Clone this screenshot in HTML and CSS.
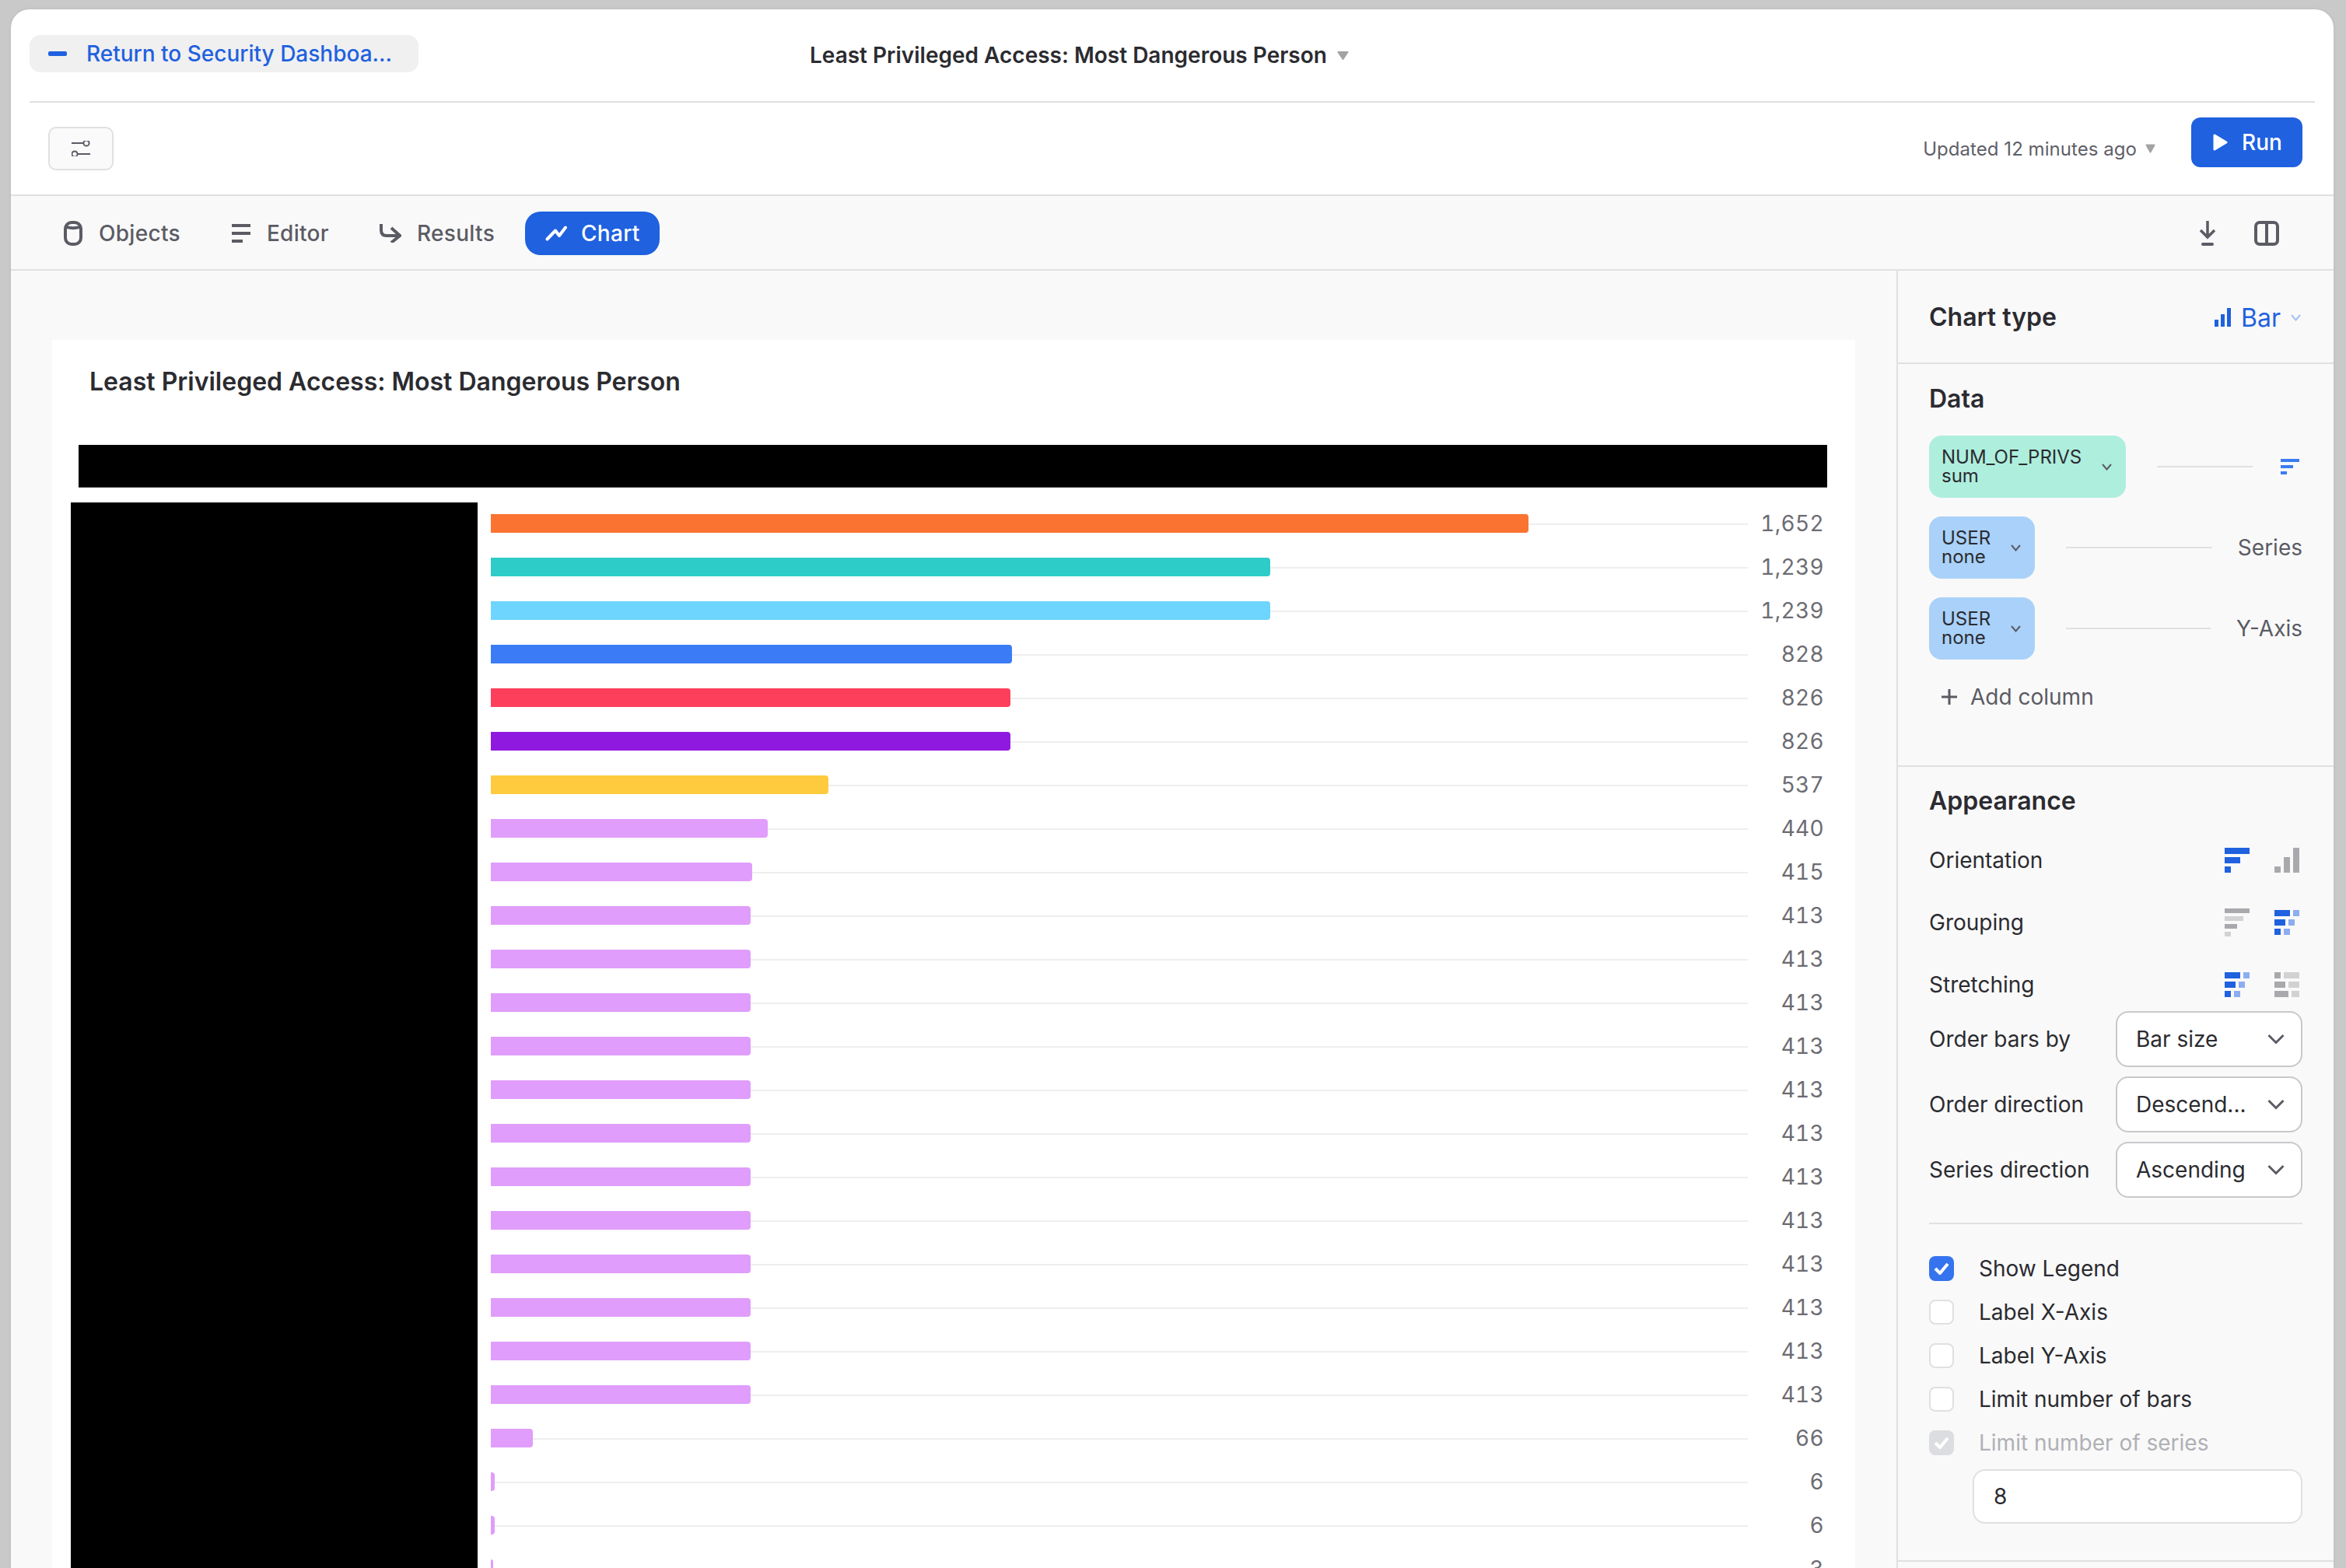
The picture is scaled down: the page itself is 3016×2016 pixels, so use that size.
FILE: index.html
```html
<!DOCTYPE html>
<html lang="en">
<head>
    <meta charset="UTF-8">
    <title>Least Privileged Access: Most Dangerous Person</title>
    <link rel="stylesheet" href="styles.css">
</head>
<body>
<div class="window">

    <!-- Top bar -->
    <div class="top-bar">
        <div class="back-btn">
            <svg width="24" height="6" viewBox="0 0 24 6"><rect width="24" height="6" rx="2" fill="#1f61df"/></svg>
            <span>Return to Security Dashboa...</span>
        </div>
        <div class="page-title">Least Privileged Access: Most Dangerous Person</div>
        <svg class="caret" width="15" height="11" viewBox="0 0 15 11"><path d="M1.5 1h12L7.5 10z" fill="#a3a3a6" stroke="#a3a3a6" stroke-width="2" stroke-linejoin="round"/></svg>
    </div>

    <!-- Toolbar -->
    <div class="toolbar">
        <div class="filter-btn">
            <svg width="24" height="20" viewBox="0 0 24 20" fill="none" stroke="#5b5b64" stroke-width="2">
                <path d="M0 3h15.500M24 17H8"/>
                <circle cx="19" cy="3" r="3.600"/>
                <circle cx="4" cy="17" r="3.600"/>
            </svg>
        </div>
        <div class="updated">Updated 12 minutes ago</div>
        <svg class="updated-caret" width="13" height="12" viewBox="0 0 13 12"><path d="M1.5 1.5h10L6.5 10.500z" fill="#a3a3a6" stroke="#a3a3a6" stroke-width="2" stroke-linejoin="round"/></svg>
        <div class="run-btn">
            <svg width="19" height="22" viewBox="0 0 19 22"><path d="M2 2l15 9L2 20z" fill="#fff" stroke="#fff" stroke-width="3" stroke-linejoin="round"/></svg>
            <span>Run</span>
        </div>
    </div>

    <!-- Tabs -->
    <div class="tabs">
        <div class="tab">
            <svg width="26" height="32" viewBox="0 0 26 32" fill="none" stroke="#5b5b64" stroke-width="4">
                <rect x="3" y="2" width="20" height="28" rx="8"/>
                <path d="M3 6.500c3 3.500 17 3.500 20 0"/>
            </svg>
            <span>Objects</span>
        </div>
        <div class="tab">
            <svg width="26" height="24" viewBox="0 0 26 24" fill="#5b5b64">
                <rect x="1" y="0" width="24" height="4"/>
                <rect x="1" y="10" width="24" height="4"/>
                <rect x="1" y="20" width="14" height="4"/>
            </svg>
            <span>Editor</span>
        </div>
        <div class="tab">
            <svg width="28" height="24" viewBox="0 0 28 24" fill="none" stroke="#5b5b64" stroke-width="4">
                <path d="M2 0v8q0 7 7 7h17"/>
                <path d="M15 5l11 10-11 9"/>
            </svg>
            <span>Results</span>
        </div>
        <div class="tab tab-active">
            <svg width="28" height="22" viewBox="0 0 28 22" fill="none" stroke="#fff" stroke-width="4" stroke-linecap="round" stroke-linejoin="round">
                <path d="M2.500 18.500L13 7.500l5 6.500 8-10.500"/>
            </svg>
            <span>Chart</span>
        </div>
        <div class="tab-tools">
            <svg width="22" height="32" viewBox="0 0 22 32" fill="none" stroke="#5b5b64" stroke-width="3.500">
                <path d="M11 0v20M2 12l9 9 9-9"/>
                <path d="M5 30h12" stroke-width="4" stroke-linecap="round"/>
            </svg>
            <svg width="32" height="32" viewBox="0 0 32 32" fill="none" stroke="#5b5b64" stroke-width="4">
                <rect x="2" y="2" width="28" height="28" rx="5"/>
                <path d="M16 2v28"/>
            </svg>
        </div>
    </div>

    <div class="main">

        <!-- Chart -->
        <div class="canvas">
            <div class="card">
                <h1 class="card-title">Least Privileged Access: Most Dangerous Person</h1>
                <div class="mask-top"></div>
                <div class="chart-body">
                    <div class="mask-left"></div>
                    <div class="plot">
                        <div class="row"><div class="bar orange" style="width:1334px"></div><div class="grid-line"></div><div class="value">1,652</div></div>
                        <div class="row"><div class="bar teal" style="width:1002px"></div><div class="grid-line"></div><div class="value">1,239</div></div>
                        <div class="row"><div class="bar sky" style="width:1002px"></div><div class="grid-line"></div><div class="value">1,239</div></div>
                        <div class="row"><div class="bar blue" style="width:670px"></div><div class="grid-line"></div><div class="value">828</div></div>
                        <div class="row"><div class="bar red" style="width:668px"></div><div class="grid-line"></div><div class="value">826</div></div>
                        <div class="row"><div class="bar purple" style="width:668px"></div><div class="grid-line"></div><div class="value">826</div></div>
                        <div class="row"><div class="bar yellow" style="width:434px"></div><div class="grid-line"></div><div class="value">537</div></div>
                        <div class="row"><div class="bar pink" style="width:356px"></div><div class="grid-line"></div><div class="value">440</div></div>
                        <div class="row"><div class="bar pink" style="width:336px"></div><div class="grid-line"></div><div class="value">415</div></div>
                        <div class="row"><div class="bar pink" style="width:334px"></div><div class="grid-line"></div><div class="value">413</div></div>
                        <div class="row"><div class="bar pink" style="width:334px"></div><div class="grid-line"></div><div class="value">413</div></div>
                        <div class="row"><div class="bar pink" style="width:334px"></div><div class="grid-line"></div><div class="value">413</div></div>
                        <div class="row"><div class="bar pink" style="width:334px"></div><div class="grid-line"></div><div class="value">413</div></div>
                        <div class="row"><div class="bar pink" style="width:334px"></div><div class="grid-line"></div><div class="value">413</div></div>
                        <div class="row"><div class="bar pink" style="width:334px"></div><div class="grid-line"></div><div class="value">413</div></div>
                        <div class="row"><div class="bar pink" style="width:334px"></div><div class="grid-line"></div><div class="value">413</div></div>
                        <div class="row"><div class="bar pink" style="width:334px"></div><div class="grid-line"></div><div class="value">413</div></div>
                        <div class="row"><div class="bar pink" style="width:334px"></div><div class="grid-line"></div><div class="value">413</div></div>
                        <div class="row"><div class="bar pink" style="width:334px"></div><div class="grid-line"></div><div class="value">413</div></div>
                        <div class="row"><div class="bar pink" style="width:334px"></div><div class="grid-line"></div><div class="value">413</div></div>
                        <div class="row"><div class="bar pink" style="width:334px"></div><div class="grid-line"></div><div class="value">413</div></div>
                        <div class="row"><div class="bar pink" style="width:54px"></div><div class="grid-line"></div><div class="value">66</div></div>
                        <div class="row"><div class="bar pink" style="width:5px"></div><div class="grid-line"></div><div class="value">6</div></div>
                        <div class="row"><div class="bar pink" style="width:5px"></div><div class="grid-line"></div><div class="value">6</div></div>
                        <div class="row"><div class="bar pink" style="width:3px"></div><div class="grid-line"></div><div class="value">3</div></div>
                    </div>
                </div>
            </div>
        </div>

        <!-- Settings panel -->
        <div class="sidebar">
            <div class="section chart-type">
                <h3>Chart type</h3>
                <div class="type-picker">
                    <svg width="21" height="24" viewBox="0 0 21 24" fill="#1f61df">
                        <rect x="0" y="15" width="5" height="9"/>
                        <rect x="8" y="8" width="5" height="16"/>
                        <rect x="16" y="0" width="5" height="24"/>
                    </svg>
                    <span>Bar</span>
                    <svg width="13" height="9" viewBox="0 0 13 9" fill="none" stroke="#a3c0f3" stroke-width="2"><path d="M1 1l5.500 6.500L12 1"/></svg>
                </div>
            </div>

            <div class="section data-section">
                <h3>Data</h3>
                <div class="data-row">
                    <div class="pill pill-green">
                        <div>NUM_OF_PRIVS<br>sum</div>
                        <svg width="13" height="9" viewBox="0 0 13 9" fill="none" stroke="#5b5b64" stroke-width="2"><path d="M1 1l5.500 6.500L12 1"/></svg>
                    </div>
                    <div class="connector"></div>
                    <svg class="sort-icon" width="24" height="20" viewBox="0 0 24 20" fill="#3b7cf2">
                        <rect width="24" height="4"/>
                        <rect y="8" width="16" height="4"/>
                        <rect y="16" width="8" height="4"/>
                    </svg>
                </div>
                <div class="data-row">
                    <div class="pill pill-blue">
                        <div>USER<br>none</div>
                        <svg width="13" height="9" viewBox="0 0 13 9" fill="none" stroke="#5b5b64" stroke-width="2"><path d="M1 1l5.500 6.500L12 1"/></svg>
                    </div>
                    <div class="connector"></div>
                    <div class="axis-label">Series</div>
                </div>
                <div class="data-row">
                    <div class="pill pill-blue">
                        <div>USER<br>none</div>
                        <svg width="13" height="9" viewBox="0 0 13 9" fill="none" stroke="#5b5b64" stroke-width="2"><path d="M1 1l5.500 6.500L12 1"/></svg>
                    </div>
                    <div class="connector"></div>
                    <div class="axis-label">Y-Axis</div>
                </div>
                <div class="add-column">
                    <svg width="20" height="20" viewBox="0 0 20 20" fill="#5b5b64"><rect y="8.500" width="20" height="3"/><rect x="8.500" width="3" height="20"/></svg>
                    <span>Add column</span>
                </div>
            </div>

            <div class="section appearance">
                <h3>Appearance</h3>
                <div class="option-row">
                    <span>Orientation</span>
                    <div class="option-icons">
                        <svg width="32" height="32" viewBox="0 0 32 32" fill="#1f61df">
                            <rect width="32" height="8"/><rect y="12" width="20" height="8"/><rect y="24" width="8" height="8"/>
                        </svg>
                        <svg width="32" height="32" viewBox="0 0 32 32" fill="#a9a9ad">
                            <rect y="24" width="8" height="8"/><rect x="12" y="12" width="8" height="20"/><rect x="24" width="8" height="32"/>
                        </svg>
                    </div>
                </div>
                <div class="option-row">
                    <span>Grouping</span>
                    <div class="option-icons">
                        <svg width="32" height="36" viewBox="0 0 32 36">
                            <rect width="32" height="6" fill="#a9a9ad"/><rect y="10" width="24" height="6" fill="#d2d2d4"/>
                            <rect y="20" width="16" height="6" fill="#a9a9ad"/><rect y="30" width="8" height="6" fill="#d2d2d4"/>
                        </svg>
                        <svg width="32" height="32" viewBox="0 0 32 32">
                            <g fill="#1f61df"><rect width="20" height="8"/><rect y="12" width="14" height="8"/><rect y="24" width="8" height="8"/></g>
                            <g fill="#8caef0"><rect x="24" width="8" height="8"/><rect x="18" y="12" width="8" height="8"/><rect x="12" y="24" width="8" height="8"/></g>
                        </svg>
                    </div>
                </div>
                <div class="option-row">
                    <span>Stretching</span>
                    <div class="option-icons">
                        <svg width="32" height="32" viewBox="0 0 32 32">
                            <g fill="#1f61df"><rect width="20" height="8"/><rect y="12" width="14" height="8"/><rect y="24" width="8" height="8"/></g>
                            <g fill="#8caef0"><rect x="24" width="8" height="8"/><rect x="18" y="12" width="8" height="8"/><rect x="12" y="24" width="8" height="8"/></g>
                        </svg>
                        <svg width="32" height="32" viewBox="0 0 32 32">
                            <g fill="#a9a9ad"><rect width="8" height="8"/><rect y="12" width="14" height="8"/><rect y="24" width="18" height="8"/></g>
                            <g fill="#d2d2d4"><rect x="12" width="20" height="8"/><rect x="18" y="12" width="14" height="8"/><rect x="22" y="24" width="10" height="8"/></g>
                        </svg>
                    </div>
                </div>

                <div class="select-list">
                    <div class="select-row">
                        <span>Order bars by</span>
                        <div class="select">
                            <span>Bar size</span>
                            <svg width="22" height="14" viewBox="0 0 22 14" fill="none" stroke="#5b5b64" stroke-width="3"><path d="M1.500 2L11 11.500 20.500 2"/></svg>
                        </div>
                    </div>
                    <div class="select-row">
                        <span>Order direction</span>
                        <div class="select">
                            <span>Descend...</span>
                            <svg width="22" height="14" viewBox="0 0 22 14" fill="none" stroke="#5b5b64" stroke-width="3"><path d="M1.500 2L11 11.500 20.500 2"/></svg>
                        </div>
                    </div>
                    <div class="select-row">
                        <span>Series direction</span>
                        <div class="select">
                            <span>Ascending</span>
                            <svg width="22" height="14" viewBox="0 0 22 14" fill="none" stroke="#5b5b64" stroke-width="3"><path d="M1.500 2L11 11.500 20.500 2"/></svg>
                        </div>
                    </div>
                </div>

                <div class="divider"></div>

                <div class="check-list">
                    <div class="check-row">
                        <div class="checkbox checked">
                            <svg width="20" height="16" viewBox="0 0 20 16" fill="none" stroke="#fff" stroke-width="4"><path d="M2 8l6 6L18 2"/></svg>
                        </div>
                        <span>Show Legend</span>
                    </div>
                    <div class="check-row"><div class="checkbox"></div><span>Label X-Axis</span></div>
                    <div class="check-row"><div class="checkbox"></div><span>Label Y-Axis</span></div>
                    <div class="check-row"><div class="checkbox"></div><span>Limit number of bars</span></div>
                    <div class="check-row disabled">
                        <div class="checkbox disabled-box">
                            <svg width="20" height="16" viewBox="0 0 20 16" fill="none" stroke="#fff" stroke-width="4"><path d="M2 8l6 6L18 2"/></svg>
                        </div>
                        <span>Limit number of series</span>
                    </div>
                </div>
                <div class="number-input">8</div>
            </div>

            <div class="section-end"></div>
        </div>
    </div>
</div>
</body>
</html>
```

FILE: styles.css
```css
* {
    box-sizing: border-box;
}
body {
    margin: 0;
    height: 2016px;
    overflow: hidden;
    background: #c9c9c9;
    font-family: Inter, "Liberation Sans", sans-serif;
    font-size: 28px;
    color: #2b2b30;
}
.window {
    margin: 12px 16px 0 14px;
    height: 2004px;
    background: white;
    border-radius: 24px 24px 0 0;
    box-shadow: 0 0 4px rgba(0, 0, 0, 0.08);
    overflow: hidden;
    display: flex;
    flex-direction: column;
}

/* top bar */
.top-bar {
    height: 120px;
    margin: 0 24px;
    padding-top: 33px;
    display: flex;
    align-items: flex-start;
    border-bottom: 2px solid #e0e0e0;
}
.back-btn {
    width: 500px;
    height: 48px;
    padding-left: 24px;
    display: flex;
    align-items: center;
    gap: 25px;
    background: #f0f0f0;
    border-radius: 14px;
    color: #1f61df;
    font-weight: 500;
    white-space: nowrap;
}
.page-title {
    margin-left: 503px;
    line-height: 52px;
    font-weight: 600;
    white-space: nowrap;
}
.caret {
    margin: 21px 0 0 13px;
}

/* toolbar */
.toolbar {
    height: 120px;
    padding: 19px 40px 0 48px;
    display: flex;
    align-items: flex-start;
    border-bottom: 2px solid #e0e0e0;
}
.filter-btn {
    width: 84px;
    height: 56px;
    margin-top: 12px;
    display: flex;
    align-items: center;
    justify-content: center;
    background: #fafafa;
    border: 2px solid #e0e0e0;
    border-radius: 10px;
}
.updated {
    margin: 23px 0 0 auto;
    line-height: 36px;
    font-size: 24px;
    letter-spacing: 0.05px;
    color: #5f5f68;
}
.updated-caret {
    margin: 34px 46px 0 11px;
}
.run-btn {
    width: 143px;
    height: 64px;
    padding-left: 28px;
    display: flex;
    align-items: center;
    gap: 18px;
    background: #1f61df;
    border-radius: 12px;
    color: white;
    font-weight: 500;
}

/* tabs */
.tabs {
    height: 96px;
    padding: 2px 70px 0 41px;
    display: flex;
    align-items: center;
    gap: 16px;
    background: #f9f9f9;
    border-bottom: 2px solid #e0e0e0;
}
.tab {
    height: 56px;
    padding: 0 23px 0 26px;
    display: flex;
    align-items: center;
    gap: 20px;
    border-radius: 20px;
    color: #5b5b64;
    font-weight: 500;
    letter-spacing: 0.3px;
}
.tab-active {
    padding-right: 25px;
    gap: 18px;
    background: #1f61df;
    color: white;
}
.tab-tools {
    margin-left: auto;
    display: flex;
    align-items: center;
    gap: 49px;
}

/* chart */
.main {
    flex: 1;
    display: flex;
    min-height: 0;
}
.canvas {
    flex: 1;
    padding: 89px 53px 0;
    background: #f9f9f9;
}
.card {
    height: 100%;
    padding-left: 24px;
    background: white;
}
.card-title {
    margin: 0 0 0 24px;
    padding-top: 34px;
    line-height: 40px;
    font-size: 32px;
    font-weight: 600;
}
.mask-top {
    width: 2248px;
    height: 55px;
    margin: 61px 0 0 10px;
    background: black;
    border-bottom: 1px solid #444;
}
.chart-body {
    margin-top: 18px;
    display: flex;
    align-items: flex-start;
}
.mask-left {
    width: 523px;
    height: 1400px;
    margin-top: 1px;
    background: black;
}
.plot {
    width: 1714px;
    margin-left: 17px;
}
.row {
    height: 56px;
    display: flex;
    align-items: center;
}
.bar {
    height: 24px;
    border-radius: 0 4px 4px 0;
}
.grid-line {
    flex: 1;
    height: 2px;
    margin-top: 2px;
    background: #eeeeee;
}
.value {
    width: 98px;
    text-align: right;
    font-size: 28px;
    font-variant-numeric: tabular-nums;
    letter-spacing: 0.3px;
    color: #6c6c72;
}
.orange { background: #fa7331; }
.teal { background: #2dccc9; }
.sky { background: #6dd5fe; }
.blue { background: #3b7cf6; }
.red { background: #fe3f5c; }
.purple { background: #9019e0; }
.yellow { background: #fecb3e; }
.pink { background: #e09dfb; }

/* settings panel */
.sidebar {
    width: 562px;
    background: #f9f9f9;
    border-left: 2px solid #e0e0e0;
}
.section {
    padding: 0 40px;
    border-bottom: 2px solid #e0e0e0;
}
.section h3 {
    margin: 0;
    line-height: 40px;
    font-size: 32px;
    font-weight: 600;
}
.chart-type {
    height: 120px;
    padding-top: 2px;
    display: flex;
    align-items: center;
    justify-content: space-between;
}
.type-picker {
    margin-right: 2px;
    display: flex;
    align-items: center;
    gap: 13px;
    font-size: 32px;
    color: #1f61df;
}
.data-section {
    height: 518px;
    padding-top: 25px;
}
.data-row {
    margin-top: 24px;
    display: flex;
    align-items: center;
}
.data-section h3 + .data-row {
    margin-top: 27px;
}
.pill {
    height: 80px;
    padding: 0 18px 0 16px;
    display: flex;
    align-items: center;
    gap: 26px;
    border-radius: 16px;
    font-size: 24px;
    line-height: 24px;
}
.pill-green { background: #aeeedd; }
.pill-blue { background: #a9d1f9; }
.connector {
    flex: 1;
    height: 2px;
    margin: 0 33px 0 40px;
    background: #e0e0e0;
}
.sort-icon {
    margin: 0 4px 0 3px;
}
.axis-label {
    color: #5b5b64;
}
.add-column {
    margin: 30px 0 0 16px;
    line-height: 36px;
    display: flex;
    align-items: center;
    gap: 17px;
    color: #5b5b64;
}
.appearance {
    height: 1022px;
    padding-top: 24px;
}
.option-row {
    height: 48px;
    margin-top: 32px;
    display: flex;
    align-items: center;
    justify-content: space-between;
}
.option-icons {
    margin-right: 4px;
    display: flex;
    align-items: center;
    gap: 32px;
}
.select-list {
    margin-top: 10px;
    display: flex;
    flex-direction: column;
    gap: 12px;
}
.select-row {
    display: flex;
    align-items: center;
    justify-content: space-between;
}
.select {
    width: 240px;
    height: 72px;
    padding: 0 21px 0 24px;
    display: flex;
    align-items: center;
    justify-content: space-between;
    background: white;
    border: 2px solid #c8c8cc;
    border-radius: 16px;
}
.divider {
    height: 2px;
    margin-top: 32px;
    background: #e0e0e0;
}
.check-list {
    margin-top: 41px;
    display: flex;
    flex-direction: column;
    gap: 24px;
}
.check-row {
    height: 32px;
    display: flex;
    align-items: center;
    gap: 32px;
}
.checkbox {
    width: 32px;
    height: 32px;
    display: flex;
    align-items: center;
    justify-content: center;
    background: white;
    border: 2px solid #e0e0e0;
    border-radius: 8px;
}
.checked {
    background: #3574ee;
    border: none;
}
.disabled-box {
    background: #dcdde0;
    border: none;
}
.disabled {
    color: #b0b0b5;
}
.number-input {
    height: 70px;
    margin: 18px 0 0 56px;
    padding-left: 25px;
    display: flex;
    align-items: center;
    background: white;
    border: 2px solid #e0e0e0;
    border-radius: 16px;
}
```
